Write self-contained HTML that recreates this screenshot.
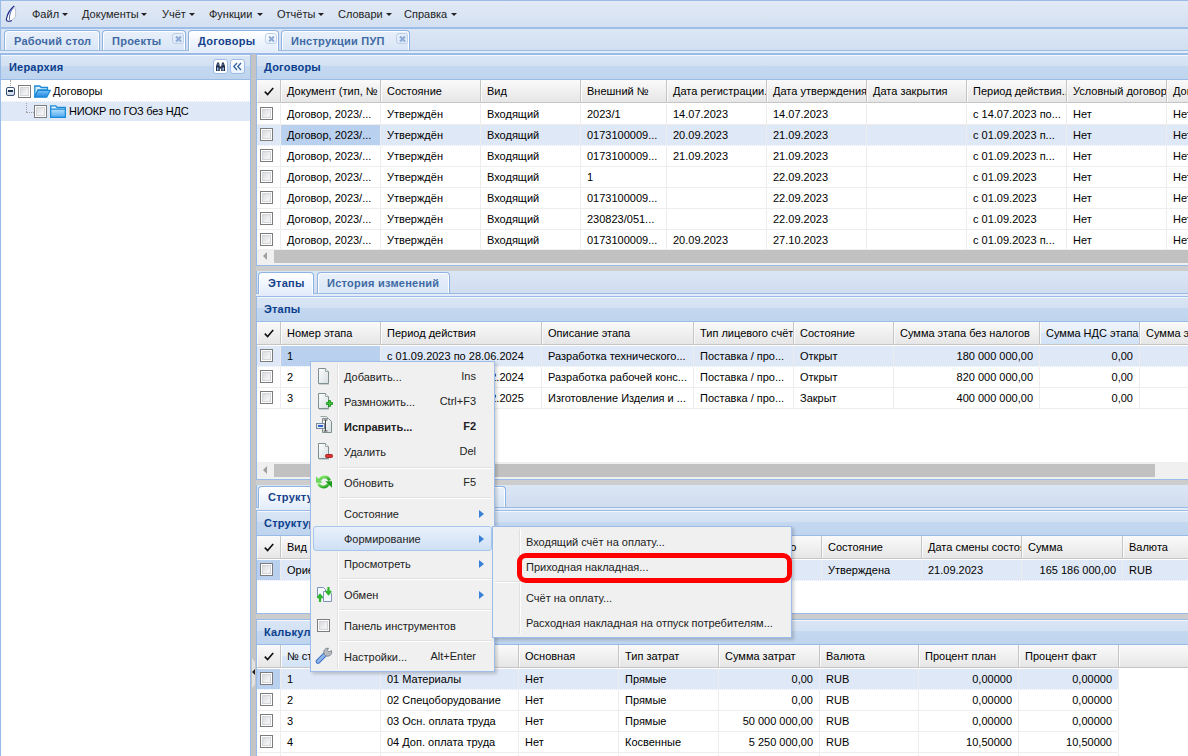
<!DOCTYPE html><html><head><meta charset="utf-8"><title>UI</title><style>
*{box-sizing:border-box;margin:0;padding:0}
html,body{width:1188px;height:756px;overflow:hidden}
body{position:relative;background:#fff;font-family:"Liberation Sans",sans-serif;font-size:11px;color:#000}
.a{position:absolute}
.t{position:absolute;white-space:nowrap;line-height:13px}
.b{font-weight:bold}
.tri{position:absolute;width:0;height:0;border-left:3px solid transparent;border-right:3px solid transparent;border-top:3px solid #222}
.tab{position:absolute;border:1px solid #8eb3e3;border-bottom:none;border-radius:4px 4px 0 0;background:linear-gradient(#e9f0fa,#d9e6f6);box-shadow:inset 1px 1px 0 #fff,inset -1px 0 0 #fff}
.tab.act{background:linear-gradient(#ffffff,#e3edfb)}
.tabt{position:absolute;font-weight:bold;color:#3e69a4;white-space:nowrap;line-height:13px;letter-spacing:.25px}
.act .tabt{color:#15428b}
.cls{position:absolute;width:12px;height:11px;border:1px solid #bcd0ec;border-radius:3px}
.cls:before,.cls:after{content:"";position:absolute;left:1.5px;top:3.5px;width:7px;height:2px;background:#8eaad6;transform:rotate(45deg)}
.cls:after{transform:rotate(-45deg)}
.ph{position:absolute;height:25px;background:linear-gradient(#dae6f5 0,#d3e1f3 45%,#c4d8f0 46%,#bfd4ee 100%);border-bottom:1px solid #99bbe8;box-shadow:inset 0 1px 0 #f4f8fd}
.pht{position:absolute;left:7px;top:6px;font-weight:bold;color:#0b3f8c;white-space:nowrap;line-height:13px;letter-spacing:.2px}
.gh{position:absolute;height:23px;background:linear-gradient(#fafafa,#e6e6e6);border-bottom:1px solid #c5c5c5}
.hc{position:absolute;top:0;height:22px;border-right:1px solid #c5c5c5;overflow:hidden;white-space:nowrap;padding:5px 0 0 6px;line-height:13px;box-shadow:inset 1px 0 0 #fbfbfb}
.row{position:absolute;height:21px;border-bottom:1px solid #ededed;background:#fff}
.row.sel{background:#dfe8f6;border-bottom:1px dotted #fff}
.c{position:absolute;top:0;height:20px;border-right:1px solid #ededed;overflow:hidden;white-space:nowrap;padding:4px 0 0 6px;line-height:13px}
.c.r{text-align:right;padding:4px 6px 0 0}
.c.fc{background:#b9d0ee}
.chk{position:absolute;width:13px;height:13px;border:1px solid #7c7c7c;background:linear-gradient(135deg,#cdd1d8,#f3f3f3 65%,#ececec);box-shadow:inset 0 0 0 1px #fff,inset 0 0 0 2px #d4d6da}
.ck{position:absolute;left:7px;top:7px;width:10px;height:9px}
.sb{position:absolute;height:16px;background:#f0f0f0}
.thumb{position:absolute;height:13px;background:#c1c1c1}
.gray{position:absolute;background:#cdcdcd}
.menu{position:absolute;background:#f0f0f0;border:1px solid #9cbde8;box-shadow:2px 2px 3px rgba(0,0,0,.18)}
.mi{position:absolute;white-space:nowrap;line-height:13px;color:#222}
.msep{position:absolute;height:2px;border-top:1px solid #e0e0e0;border-bottom:1px solid #fff}
.mvl{position:absolute;width:2px;border-left:1px solid #e0e0e0;border-right:1px solid #fff}
.marr{position:absolute;width:0;height:0;border-top:4.5px solid transparent;border-bottom:4.5px solid transparent;border-left:5px solid #3a7fd6}
</style></head><body>
<div class="a" style="left:0;top:0;width:1188px;height:29px;background:linear-gradient(#e2eaf6,#d3e0f1);border-top:1px solid #99bbe8;border-bottom:2px solid #9dbde9;border-left:1px solid #99bbe8"></div>
<svg class="a" style="left:0;top:0" width="24" height="26" viewBox="0 0 24 26"><path d="M14.2 6 C11 8.5 7.2 14 6.3 19.6 C6.2 21.8 9.2 21.6 11.8 20.4 L15.4 16.8 C15.9 13 15.8 9 14.2 6 Z" fill="#fdfdff" stroke="#aeb6c8" stroke-width="0.8"/><path d="M14.2 6 C11 8.5 7.2 14 6.3 19.6 C6.2 21.8 9.2 21.6 11.8 20.4" fill="none" stroke="#1a2a88" stroke-width="1.1"/><path d="M13.2 8 C10.8 10.5 9.2 14.5 9.4 19.8" fill="none" stroke="#3d55a8" stroke-width="0.9"/></svg>
<div class="t" style="left:32px;top:8px;color:#222">Файл</div>
<div class="tri" style="left:62px;top:13px"></div>
<div class="t" style="left:82px;top:8px;color:#222">Документы</div>
<div class="tri" style="left:141px;top:13px"></div>
<div class="t" style="left:162px;top:8px;color:#222">Учёт</div>
<div class="tri" style="left:189px;top:13px"></div>
<div class="t" style="left:209px;top:8px;color:#222">Функции</div>
<div class="tri" style="left:257px;top:13px"></div>
<div class="t" style="left:277px;top:8px;color:#222">Отчёты</div>
<div class="tri" style="left:318px;top:13px"></div>
<div class="t" style="left:338px;top:8px;color:#222">Словари</div>
<div class="tri" style="left:386px;top:13px"></div>
<div class="t" style="left:404px;top:8px;color:#222">Справка</div>
<div class="tri" style="left:451px;top:13px"></div>
<div class="a" style="left:0;top:29px;width:1188px;height:25px;background:linear-gradient(#dce7f5,#cfddf0);border-left:1px solid #99bbe8"></div>
<div class="a" style="left:0;top:50px;width:1188px;height:1px;background:#99bbe8"></div>
<div class="a" style="left:0;top:51px;width:1188px;height:2px;background:#e3ecf8"></div>
<div class="a" style="left:0;top:53px;width:1188px;height:1px;background:#99bbe8"></div>
<div class="tab" style="left:4px;top:30px;width:96px;height:20px">
<div class="tabt" style="left:9px;top:4px">Рабочий стол</div>
</div>
<div class="tab" style="left:102px;top:30px;width:84px;height:20px">
<div class="tabt" style="left:9px;top:4px">Проекты</div>
<div class="cls" style="left:69px;top:2px"></div>
</div>
<div class="tab act" style="left:188px;top:30px;width:91px;height:21px">
<div class="tabt" style="left:9px;top:4px">Договоры</div>
<div class="cls" style="left:76px;top:2px"></div>
</div>
<div class="tab" style="left:281px;top:30px;width:129px;height:20px">
<div class="tabt" style="left:9px;top:4px">Инструкции ПУП</div>
<div class="cls" style="left:114px;top:2px"></div>
</div>
<div class="a" style="left:0;top:54px;width:251px;height:702px;border-left:1px solid #99bbe8;border-top:1px solid #99bbe8;border-right:1px solid #99bbe8;background:#fff"></div>
<div class="ph" style="left:1px;top:55px;width:249px"><div class="pht" style="left:8px">Иерархия</div></div>
<div class="a" style="left:213px;top:59px;width:15px;height:15px;border:1px solid #9dbde6;border-radius:3px;background:#fff"></div>
<svg class="a" style="left:213px;top:59px" width="15" height="15" viewBox="0 0 15 15"><path d="M3 12 v-4.5 l1.2-4 h1.8 l0.8 4 v4.5 z" fill="#1d2a44"/><path d="M8.2 12 v-4.5 l0.8-4 h1.8 l1.2 4 v4.5 z" fill="#1d2a44"/><rect x="6.5" y="7.5" width="2" height="2" fill="#1d2a44"/><rect x="4" y="8.5" width="1.5" height="3" fill="#9cc0f0"/><rect x="9.4" y="8.5" width="1.5" height="3" fill="#9cc0f0"/><rect x="4.6" y="4.5" width="1" height="2" fill="#6c8fd0"/><rect x="9.4" y="4.5" width="1" height="2" fill="#6c8fd0"/></svg>
<div class="a" style="left:230px;top:59px;width:15px;height:15px;border:1px solid #9dbde6;border-radius:3px;background:linear-gradient(#fff,#eaf2fc)"></div>
<svg class="a" style="left:230px;top:59px" width="15" height="15" viewBox="0 0 15 15"><path d="M7 4 L3.8 7.5 L7 11 M11 4 L7.8 7.5 L11 11" fill="none" stroke="#34659f" stroke-width="1.3"/></svg>
<div class="a" style="left:1px;top:101px;width:249px;height:20px;background:#dfe8f6;border-top:1px dotted #fff"></div>
<div class="a" style="left:10px;top:80px;width:1px;height:6px;border-left:1px dotted #a0a0a0"></div>
<div class="a" style="left:26px;top:103px;width:1px;height:9px;border-left:1px dotted #a0a0a0"></div>
<div class="a" style="left:26px;top:112px;width:8px;height:1px;border-top:1px dotted #a0a0a0"></div>
<div class="a" style="left:6px;top:87px;width:9px;height:9px;border:1px solid #3b5275;border-radius:2px;background:linear-gradient(#ffffff,#c9d6e6)"></div>
<div class="a" style="left:8px;top:90px;width:5px;height:2px;background:#1b2f50"></div>
<div class="chk" style="left:18px;top:85px"></div>
<div class="chk" style="left:34px;top:105px"></div>
<svg class="a" style="left:34px;top:85px" width="17" height="13" viewBox="0 0 17 13"><defs><linearGradient id="fo" x1="0" y1="0" x2="0" y2="1"><stop offset="0" stop-color="#7cc4fa"/><stop offset="1" stop-color="#1f86e0"/></linearGradient></defs><path d="M0.8 1 h5 l1.5 1.5 h6.2 v2.5 h-9.5 l-3.2 7 z" fill="#d8ecfc" stroke="#1a8ad8" stroke-width="1.3"/><path d="M4 5.3 h12.3 l-3.6 6.9 h-12.3 z" fill="url(#fo)" stroke="#1a8ad8" stroke-width="1.2"/></svg>
<div class="t" style="left:53px;top:85px">Договоры</div>
<svg class="a" style="left:50px;top:105px" width="16" height="13" viewBox="0 0 16 13"><defs><linearGradient id="fc" x1="0" y1="0" x2="0" y2="1"><stop offset="0" stop-color="#b8e0fd"/><stop offset="1" stop-color="#4aa8f0"/></linearGradient></defs><path d="M0.7 0.8 h5 l1.5 1.7 h8.1 v9.8 h-14.6 z" fill="#dff0fd" stroke="#1a8ad8" stroke-width="1.3"/><path d="M0.7 4.2 h14.6 v8.1 h-14.6 z" fill="url(#fc)" stroke="#1a8ad8" stroke-width="1.2"/></svg>
<div class="t" style="left:69px;top:105px;letter-spacing:-0.2px">НИОКР по ГОЗ без НДС</div>
<div class="gray" style="left:251px;top:54px;width:5px;height:702px;background:#c4c4c4"></div>
<div class="a" style="left:252px;top:658px;width:3px;height:30px;background:#e2e2e2;clip-path:polygon(0 0,100% 12%,100% 88%,0 100%)"></div>
<div class="a" style="left:252px;top:669px;width:0;height:0;border-top:3.5px solid transparent;border-bottom:3.5px solid transparent;border-right:3px solid #222"></div>
<div class="a" style="left:256px;top:54px;width:932px;height:212px;border-left:1px solid #99bbe8;border-top:1px solid #99bbe8;border-bottom:1px solid #99bbe8;background:#fff"></div>
<div class="ph" style="left:257px;top:55px;width:931px"><div class="pht">Договоры</div></div>
<div class="gh" style="left:257px;top:80px;width:931px"><div class="hc" style="left:0px;width:24px;padding:4px 0 0 0;"><svg class="ck" viewBox="0 0 10 9"><path d="M0.8 4.6 L3.6 7.6 L9.2 1" fill="none" stroke="#111" stroke-width="1.6"/></svg></div><div class="hc" style="left:24px;width:100px;">Документ (тип, №</div><div class="hc" style="left:124px;width:100px;">Состояние</div><div class="hc" style="left:224px;width:100px;">Вид</div><div class="hc" style="left:324px;width:86px;">Внешний №</div><div class="hc" style="left:410px;width:100px;">Дата регистрации..</div><div class="hc" style="left:510px;width:100px;">Дата утверждения</div><div class="hc" style="left:610px;width:100px;">Дата закрытия</div><div class="hc" style="left:710px;width:100px;">Период действия..</div><div class="hc" style="left:810px;width:100px;">Условный договор</div><div class="hc" style="left:910px;width:100px;">Дог</div></div><div class="row" style="left:257px;top:104px;width:931px"><div class="c" style="left:0px;width:24px"><div class="chk" style="left:3px;top:3px"></div></div><div class="c" style="left:24px;width:100px">Договор, 2023/...</div><div class="c" style="left:124px;width:100px">Утверждён</div><div class="c" style="left:224px;width:100px">Входящий</div><div class="c" style="left:324px;width:86px">2023/1</div><div class="c" style="left:410px;width:100px">14.07.2023</div><div class="c" style="left:510px;width:100px">14.07.2023</div><div class="c" style="left:610px;width:100px"></div><div class="c" style="left:710px;width:100px">с 14.07.2023 по...</div><div class="c" style="left:810px;width:100px">Нет</div><div class="c" style="left:910px;width:100px">Нет</div></div><div class="row sel" style="left:257px;top:125px;width:931px"><div class="c" style="left:0px;width:24px"><div class="chk" style="left:3px;top:3px"></div></div><div class="c fc" style="left:24px;width:100px">Договор, 2023/...</div><div class="c" style="left:124px;width:100px">Утверждён</div><div class="c" style="left:224px;width:100px">Входящий</div><div class="c" style="left:324px;width:86px">0173100009...</div><div class="c" style="left:410px;width:100px">20.09.2023</div><div class="c" style="left:510px;width:100px">21.09.2023</div><div class="c" style="left:610px;width:100px"></div><div class="c" style="left:710px;width:100px">с 01.09.2023 п...</div><div class="c" style="left:810px;width:100px">Нет</div><div class="c" style="left:910px;width:100px">Нет</div></div><div class="row" style="left:257px;top:146px;width:931px"><div class="c" style="left:0px;width:24px"><div class="chk" style="left:3px;top:3px"></div></div><div class="c" style="left:24px;width:100px">Договор, 2023/...</div><div class="c" style="left:124px;width:100px">Утверждён</div><div class="c" style="left:224px;width:100px">Входящий</div><div class="c" style="left:324px;width:86px">0173100009...</div><div class="c" style="left:410px;width:100px">21.09.2023</div><div class="c" style="left:510px;width:100px">21.09.2023</div><div class="c" style="left:610px;width:100px"></div><div class="c" style="left:710px;width:100px">с 01.09.2023 п...</div><div class="c" style="left:810px;width:100px">Нет</div><div class="c" style="left:910px;width:100px">Нет</div></div><div class="row" style="left:257px;top:167px;width:931px"><div class="c" style="left:0px;width:24px"><div class="chk" style="left:3px;top:3px"></div></div><div class="c" style="left:24px;width:100px">Договор, 2023/...</div><div class="c" style="left:124px;width:100px">Утверждён</div><div class="c" style="left:224px;width:100px">Входящий</div><div class="c" style="left:324px;width:86px">1</div><div class="c" style="left:410px;width:100px"></div><div class="c" style="left:510px;width:100px">22.09.2023</div><div class="c" style="left:610px;width:100px"></div><div class="c" style="left:710px;width:100px">с 01.09.2023</div><div class="c" style="left:810px;width:100px">Нет</div><div class="c" style="left:910px;width:100px">Нет</div></div><div class="row" style="left:257px;top:188px;width:931px"><div class="c" style="left:0px;width:24px"><div class="chk" style="left:3px;top:3px"></div></div><div class="c" style="left:24px;width:100px">Договор, 2023/...</div><div class="c" style="left:124px;width:100px">Утверждён</div><div class="c" style="left:224px;width:100px">Входящий</div><div class="c" style="left:324px;width:86px">0173100009...</div><div class="c" style="left:410px;width:100px"></div><div class="c" style="left:510px;width:100px">22.09.2023</div><div class="c" style="left:610px;width:100px"></div><div class="c" style="left:710px;width:100px">с 01.09.2023</div><div class="c" style="left:810px;width:100px">Нет</div><div class="c" style="left:910px;width:100px">Нет</div></div><div class="row" style="left:257px;top:209px;width:931px"><div class="c" style="left:0px;width:24px"><div class="chk" style="left:3px;top:3px"></div></div><div class="c" style="left:24px;width:100px">Договор, 2023/...</div><div class="c" style="left:124px;width:100px">Утверждён</div><div class="c" style="left:224px;width:100px">Входящий</div><div class="c" style="left:324px;width:86px">230823/051...</div><div class="c" style="left:410px;width:100px"></div><div class="c" style="left:510px;width:100px">22.09.2023</div><div class="c" style="left:610px;width:100px"></div><div class="c" style="left:710px;width:100px">с 01.09.2023</div><div class="c" style="left:810px;width:100px">Нет</div><div class="c" style="left:910px;width:100px">Нет</div></div><div class="row" style="left:257px;top:230px;width:931px"><div class="c" style="left:0px;width:24px"><div class="chk" style="left:3px;top:3px"></div></div><div class="c" style="left:24px;width:100px">Договор, 2023/...</div><div class="c" style="left:124px;width:100px">Утверждён</div><div class="c" style="left:224px;width:100px">Входящий</div><div class="c" style="left:324px;width:86px">0173100009...</div><div class="c" style="left:410px;width:100px">20.09.2023</div><div class="c" style="left:510px;width:100px">27.10.2023</div><div class="c" style="left:610px;width:100px"></div><div class="c" style="left:710px;width:100px">с 01.09.2023 п...</div><div class="c" style="left:810px;width:100px">Нет</div><div class="c" style="left:910px;width:100px">Нет</div></div>
<div class="sb" style="left:257px;top:249px;width:931px"></div>
<div class="a" style="left:263px;top:252px;width:0;height:0;border-top:4px solid transparent;border-bottom:4px solid transparent;border-right:4px solid #a0a0a0"></div>
<div class="thumb" style="left:274px;top:250px;width:914px"></div>
<div class="gray" style="left:256px;top:266px;width:932px;height:5px"></div>
<div class="a" style="left:256px;top:271px;width:932px;height:25px;background:linear-gradient(#dbe6f4,#cfdcef);border-left:1px solid #99bbe8"></div><div class="a" style="left:256px;top:293px;width:932px;height:1px;background:#99bbe8"></div><div class="a" style="left:256px;top:294px;width:932px;height:2px;background:#e3ecf8"></div><div class="tab act" style="left:258px;top:272px;width:56px;height:22px"><div class="tabt" style="left:9px;top:4px">Этапы</div></div><div class="tab" style="left:317px;top:272px;width:133px;height:21px"><div class="tabt" style="left:9px;top:4px">История изменений</div></div>
<div class="a" style="left:256px;top:296px;width:932px;height:184px;border-left:1px solid #99bbe8;border-top:1px solid #99bbe8;border-bottom:1px solid #99bbe8;background:#fff"></div>
<div class="ph" style="left:257px;top:297px;width:931px"><div class="pht">Этапы</div></div>
<div class="gh" style="left:257px;top:322px;width:931px"><div class="hc" style="left:0px;width:24px;padding:4px 0 0 0;"><svg class="ck" viewBox="0 0 10 9"><path d="M0.8 4.6 L3.6 7.6 L9.2 1" fill="none" stroke="#111" stroke-width="1.6"/></svg></div><div class="hc" style="left:24px;width:100px;">Номер этапа</div><div class="hc" style="left:124px;width:161px;">Период действия</div><div class="hc" style="left:285px;width:152px;">Описание этапа</div><div class="hc" style="left:437px;width:100px;">Тип лицевого счёт</div><div class="hc" style="left:537px;width:100px;">Состояние</div><div class="hc" style="left:637px;width:146px;">Сумма этапа без налогов</div><div class="hc" style="left:783px;width:100px;background:linear-gradient(#eef4fc 0,#e7eff9 50%,#d9e7f8 50%,#d3e3f6 100%);">Сумма НДС этапа</div><div class="hc" style="left:883px;width:101px;">Сумма этапа</div></div><div class="row sel" style="left:257px;top:346px;width:931px"><div class="c" style="left:0px;width:24px"><div class="chk" style="left:3px;top:3px"></div></div><div class="c fc" style="left:24px;width:100px">1</div><div class="c" style="left:124px;width:161px">с 01.09.2023 по 28.06.2024</div><div class="c" style="left:285px;width:152px">Разработка технического...</div><div class="c" style="left:437px;width:100px">Поставка / про...</div><div class="c" style="left:537px;width:100px">Открыт</div><div class="c r" style="left:637px;width:146px">180 000 000,00</div><div class="c r" style="left:783px;width:100px">0,00</div><div class="c" style="left:883px;width:101px"></div></div><div class="row" style="left:257px;top:367px;width:931px"><div class="c" style="left:0px;width:24px"><div class="chk" style="left:3px;top:3px"></div></div><div class="c" style="left:24px;width:100px">2</div><div class="c" style="left:124px;width:161px">с 01.09.2023 по 31.12.2024</div><div class="c" style="left:285px;width:152px">Разработка рабочей конс...</div><div class="c" style="left:437px;width:100px">Поставка / про...</div><div class="c" style="left:537px;width:100px">Открыт</div><div class="c r" style="left:637px;width:146px">820 000 000,00</div><div class="c r" style="left:783px;width:100px">0,00</div><div class="c" style="left:883px;width:101px"></div></div><div class="row" style="left:257px;top:388px;width:931px"><div class="c" style="left:0px;width:24px"><div class="chk" style="left:3px;top:3px"></div></div><div class="c" style="left:24px;width:100px">3</div><div class="c" style="left:124px;width:161px">с 01.09.2023 по 31.12.2025</div><div class="c" style="left:285px;width:152px">Изготовление Изделия и ...</div><div class="c" style="left:437px;width:100px">Поставка / про...</div><div class="c" style="left:537px;width:100px">Закрыт</div><div class="c r" style="left:637px;width:146px">400 000 000,00</div><div class="c r" style="left:783px;width:100px">0,00</div><div class="c" style="left:883px;width:101px"></div></div>
<div class="sb" style="left:257px;top:462px;width:931px;height:17px"></div>
<div class="a" style="left:263px;top:466px;width:0;height:0;border-top:4px solid transparent;border-bottom:4px solid transparent;border-right:4px solid #a0a0a0"></div>
<div class="thumb" style="left:274px;top:464px;width:881px"></div>
<div class="gray" style="left:256px;top:480px;width:932px;height:5px"></div>
<div class="a" style="left:256px;top:485px;width:932px;height:25px;background:linear-gradient(#dbe6f4,#cfdcef);border-left:1px solid #99bbe8"></div><div class="a" style="left:256px;top:507px;width:932px;height:1px;background:#99bbe8"></div><div class="a" style="left:256px;top:508px;width:932px;height:2px;background:#e3ecf8"></div><div class="tab act" style="left:258px;top:486px;width:80px;height:22px"><div class="tabt" style="left:9px;top:4px">Структура договора</div></div><div class="tab" style="left:342px;top:486px;width:164px;height:21px"><div class="tabt" style="left:9px;top:4px">Второй</div></div>
<div class="a" style="left:256px;top:510px;width:932px;height:104px;border-left:1px solid #99bbe8;border-top:1px solid #99bbe8;border-bottom:1px solid #99bbe8;background:#fff"></div>
<div class="ph" style="left:257px;top:511px;width:931px"><div class="pht">Структура договора</div></div>
<div class="gh" style="left:257px;top:536px;width:931px"><div class="hc" style="left:0px;width:24px;padding:4px 0 0 0;"><svg class="ck" viewBox="0 0 10 9"><path d="M0.8 4.6 L3.6 7.6 L9.2 1" fill="none" stroke="#111" stroke-width="1.6"/></svg></div><div class="hc" style="left:24px;width:100px;">Вид</div><div class="hc" style="left:124px;width:141px;"></div><div class="hc" style="left:265px;width:100px;"></div><div class="hc" style="left:365px;width:100px;"></div><div class="hc" style="left:465px;width:100px;">&nbsp;&nbsp;&nbsp;&nbsp;Исполнено</div><div class="hc" style="left:565px;width:100px;">Состояние</div><div class="hc" style="left:665px;width:100px;">Дата смены состояния</div><div class="hc" style="left:765px;width:101px;">Сумма</div><div class="hc" style="left:866px;width:100px;">Валюта</div></div><div class="row sel" style="left:257px;top:560px;width:931px"><div class="c fc" style="left:0px;width:24px"><div class="chk" style="left:3px;top:3px"></div></div><div class="c" style="left:24px;width:100px">Ориентировочная</div><div class="c" style="left:124px;width:141px"></div><div class="c" style="left:265px;width:100px"></div><div class="c" style="left:365px;width:100px"></div><div class="c" style="left:465px;width:100px"></div><div class="c" style="left:565px;width:100px">Утверждена</div><div class="c" style="left:665px;width:100px">21.09.2023</div><div class="c r" style="left:765px;width:101px">165 186 000,00</div><div class="c" style="left:866px;width:100px">RUB</div></div>
<div class="gray" style="left:256px;top:614px;width:932px;height:5px"></div>
<div class="a" style="left:256px;top:619px;width:932px;height:137px;border-left:1px solid #99bbe8;border-top:1px solid #99bbe8;background:#fff"></div>
<div class="ph" style="left:257px;top:620px;width:931px"><div class="pht">Калькуляция</div></div>
<div class="gh" style="left:257px;top:645px;width:931px"><div class="hc" style="left:0px;width:24px;padding:4px 0 0 0;"><svg class="ck" viewBox="0 0 10 9"><path d="M0.8 4.6 L3.6 7.6 L9.2 1" fill="none" stroke="#111" stroke-width="1.6"/></svg></div><div class="hc" style="left:24px;width:100px;background:linear-gradient(#eef4fc 0,#e7eff9 50%,#d9e7f8 50%,#d3e3f6 100%);">№ статьи</div><div class="hc" style="left:124px;width:138px;">Статья затрат</div><div class="hc" style="left:262px;width:100px;">Основная</div><div class="hc" style="left:362px;width:100px;">Тип затрат</div><div class="hc" style="left:462px;width:101px;">Сумма затрат</div><div class="hc" style="left:563px;width:99px;">Валюта</div><div class="hc" style="left:662px;width:100px;">Процент план</div><div class="hc" style="left:762px;width:100px;">Процент факт</div><div class="hc" style="left:862px;width:70px;"></div></div><div class="row sel" style="left:257px;top:669px;width:861px"><div class="c fc" style="left:0px;width:24px"><div class="chk" style="left:3px;top:3px"></div></div><div class="c" style="left:24px;width:100px">1</div><div class="c" style="left:124px;width:138px">01 Материалы</div><div class="c" style="left:262px;width:100px">Нет</div><div class="c" style="left:362px;width:100px">Прямые</div><div class="c r" style="left:462px;width:101px">0,00</div><div class="c" style="left:563px;width:99px">RUB</div><div class="c r" style="left:662px;width:100px">0,00000</div><div class="c r" style="left:762px;width:100px">0,00000</div></div><div class="row" style="left:257px;top:690px;width:861px"><div class="c" style="left:0px;width:24px"><div class="chk" style="left:3px;top:3px"></div></div><div class="c" style="left:24px;width:100px">2</div><div class="c" style="left:124px;width:138px">02 Спецоборудование</div><div class="c" style="left:262px;width:100px">Нет</div><div class="c" style="left:362px;width:100px">Прямые</div><div class="c r" style="left:462px;width:101px">0,00</div><div class="c" style="left:563px;width:99px">RUB</div><div class="c r" style="left:662px;width:100px">0,00000</div><div class="c r" style="left:762px;width:100px">0,00000</div></div><div class="row" style="left:257px;top:711px;width:861px"><div class="c" style="left:0px;width:24px"><div class="chk" style="left:3px;top:3px"></div></div><div class="c" style="left:24px;width:100px">3</div><div class="c" style="left:124px;width:138px">03 Осн. оплата труда</div><div class="c" style="left:262px;width:100px">Нет</div><div class="c" style="left:362px;width:100px">Прямые</div><div class="c r" style="left:462px;width:101px">50 000 000,00</div><div class="c" style="left:563px;width:99px">RUB</div><div class="c r" style="left:662px;width:100px">0,00000</div><div class="c r" style="left:762px;width:100px">0,00000</div></div><div class="row" style="left:257px;top:732px;width:861px"><div class="c" style="left:0px;width:24px"><div class="chk" style="left:3px;top:3px"></div></div><div class="c" style="left:24px;width:100px">4</div><div class="c" style="left:124px;width:138px">04 Доп. оплата труда</div><div class="c" style="left:262px;width:100px">Нет</div><div class="c" style="left:362px;width:100px">Косвенные</div><div class="c r" style="left:462px;width:101px">5 250 000,00</div><div class="c" style="left:563px;width:99px">RUB</div><div class="c r" style="left:662px;width:100px">10,50000</div><div class="c r" style="left:762px;width:100px">10,50000</div></div><div class="row" style="left:257px;top:753px;width:861px"><div class="c" style="left:0px;width:24px"><div class="chk" style="left:3px;top:3px"></div></div><div class="c" style="left:24px;width:100px">5</div><div class="c" style="left:124px;width:138px"></div><div class="c" style="left:262px;width:100px"></div><div class="c" style="left:362px;width:100px"></div><div class="c r" style="left:462px;width:101px"></div><div class="c" style="left:563px;width:99px"></div><div class="c r" style="left:662px;width:100px"></div><div class="c r" style="left:762px;width:100px"></div></div>
<div class="menu" style="left:310px;top:361px;width:185px;height:311px">
<div class="mvl" style="left:26px;top:2px;height:304px"></div>
<div class="a" style="left:2px;top:164px;width:179px;height:25px;border:1px solid #a8c6ec;border-radius:3px;background:linear-gradient(#e9f1fb,#cfe0f5)"></div>
<div class="mi" style="left:33px;top:9px">Добавить...</div>
<div class="mi" style="right:18px;top:8px">Ins</div>
<div class="mi" style="left:33px;top:34px">Размножить...</div>
<div class="mi" style="right:18px;top:33px">Ctrl+F3</div>
<div class="mi b" style="left:33px;top:59px">Исправить...</div>
<div class="mi b" style="right:18px;top:58px">F2</div>
<div class="mi" style="left:33px;top:84px">Удалить</div>
<div class="mi" style="right:18px;top:83px">Del</div>
<div class="mi" style="left:33px;top:115px">Обновить</div>
<div class="mi" style="right:18px;top:114px">F5</div>
<div class="mi" style="left:33px;top:146px">Состояние</div>
<div class="marr" style="left:168px;top:148px"></div>
<div class="mi" style="left:33px;top:171px">Формирование</div>
<div class="marr" style="left:168px;top:173px"></div>
<div class="mi" style="left:33px;top:196px">Просмотреть</div>
<div class="marr" style="left:168px;top:198px"></div>
<div class="mi" style="left:33px;top:227px">Обмен</div>
<div class="marr" style="left:168px;top:229px"></div>
<div class="mi" style="left:33px;top:258px">Панель инструментов</div>
<div class="mi" style="left:33px;top:289px">Настройки...</div>
<div class="mi" style="right:18px;top:288px">Alt+Enter</div>
<div class="msep" style="left:28px;top:105px;width:153px"></div>
<div class="msep" style="left:28px;top:135px;width:153px"></div>
<div class="msep" style="left:28px;top:216px;width:153px"></div>
<div class="msep" style="left:28px;top:247px;width:153px"></div>
<div class="msep" style="left:28px;top:278px;width:153px"></div>
</div>
<svg class="a" style="left:317px;top:368px" width="14" height="18" viewBox="0 0 14 18"><defs><linearGradient id="pg" x1="0" y1="0" x2="1" y2="1"><stop offset="0" stop-color="#ffffff"/><stop offset="1" stop-color="#d5dedf"/></linearGradient></defs><path d="M1.5 0.5 h7 l3 3 v12 h-10 z" fill="url(#pg)" stroke="#7f8e8e"/><path d="M8.5 0.5 v3 h3" fill="#fff" stroke="#9aa5a5"/><path d="M2 16.5 h10" stroke="#c9cfcf"/></svg>
<svg class="a" style="left:317px;top:393px" width="16" height="18" viewBox="0 0 16 18"><path d="M1.5 0.5 h7 l3 3 v12 h-10 z" fill="url(#pg)" stroke="#7f8e8e"/><path d="M8.5 0.5 v3 h3" fill="#fff" stroke="#9aa5a5"/><path d="M2 16.5 h10" stroke="#c9cfcf"/><path d="M9.5 9.5 h2 v-2 h2 v2 h2 v2 h-2 v2 h-2 v-2 h-2 z" fill="#3cc43c" stroke="#138a13" stroke-width="0.8"/></svg>
<svg class="a" style="left:315px;top:416px" width="18" height="19" viewBox="0 0 18 19"><path d="M7.5 2.5 h6 l3 3 v11 h-9 z" fill="url(#pg)" stroke="#7f8e8e"/><path d="M5.5 0.5 h6 l2 2" fill="none" stroke="#9aa5a5"/><rect x="1.5" y="7.5" width="8" height="5" fill="#e8ecf2" stroke="#7a8aa0"/><rect x="3" y="9" width="5" height="2" fill="#2c62d0"/><path d="M10.5 4 v11 M8.5 4 h4 M8.5 15 h4" stroke="#333" stroke-width="0.9" fill="none"/></svg>
<svg class="a" style="left:317px;top:443px" width="16" height="18" viewBox="0 0 16 18"><path d="M1.5 0.5 h7 l3 3 v12 h-10 z" fill="url(#pg)" stroke="#7f8e8e"/><path d="M8.5 0.5 v3 h3" fill="#fff" stroke="#9aa5a5"/><path d="M2 16.5 h10" stroke="#c9cfcf"/><rect x="8.5" y="11.5" width="7" height="3" rx="1" fill="#e03030" stroke="#9a1515" stroke-width="0.8"/></svg>
<svg class="a" style="left:315px;top:474px" width="18" height="16" viewBox="0 0 18 16"><defs><linearGradient id="gg" x1="0" y1="0" x2="1" y2="1"><stop offset="0" stop-color="#8fee70"/><stop offset="1" stop-color="#1a9e1a"/></linearGradient></defs><path d="M4.6 6.2 C6.5 2.2 12.5 1.5 14.6 6.5" fill="none" stroke="url(#gg)" stroke-width="2.8"/><path d="M1 2.2 L1 8.8 L7.6 8.8 Z" fill="#6ad85a"/><path d="M13.4 9.8 C11.5 13.8 5.5 14.5 3.4 9.5" fill="none" stroke="url(#gg)" stroke-width="2.8"/><path d="M17 13.8 L17 7.2 L10.4 7.2 Z" fill="#1c9c1c"/></svg>
<svg class="a" style="left:316px;top:586px" width="17" height="17" viewBox="0 0 17 17"><path d="M1.5 1.5 h6 l2 2 v8 h-8 z" fill="#f4f7fb" stroke="#7f94b8"/><path d="M7.5 5.5 h6 l2 2 v8 h-8 z" fill="#f4f7fb" stroke="#7f94b8"/><path d="M4 16 v-6 M1.5 12 l2.5 -3 l2.5 3" stroke="#2fb52f" stroke-width="2.2" fill="none"/><path d="M12.5 1 v6 M10 5 l2.5 3 l2.5 -3" stroke="#2fb52f" stroke-width="2.2" fill="none"/></svg>
<div class="chk" style="left:317px;top:619px"></div>
<svg class="a" style="left:315px;top:647px" width="18" height="17" viewBox="0 0 18 17"><path d="M3 14.5 L10.5 7" stroke="#3f74c4" stroke-width="4.6" stroke-linecap="round"/><path d="M3 14.5 L10.5 7" stroke="#8fb4e8" stroke-width="2.6" stroke-linecap="round"/><path d="M9.5 7.5 A4 4 0 0 1 13.5 1.2 L12.3 3.5 L14 5 L16.4 3.6 A4 4 0 0 1 10.5 8.5 Z" fill="#b8bcc2" stroke="#7d838b" stroke-width="0.9"/></svg>
<div class="menu" style="left:492px;top:526px;width:300px;height:112px">
<div class="mvl" style="left:26px;top:2px;height:104px"></div>
<div class="msep" style="left:2px;top:54px;width:294px"></div>
<div class="mi" style="left:33px;top:9px">Входящий счёт на оплату...</div>
<div class="mi" style="left:33px;top:34px">Приходная накладная...</div>
<div class="mi" style="left:33px;top:65px">Счёт на оплату...</div>
<div class="mi" style="left:33px;top:90px">Расходная накладная на отпуск потребителям...</div>
</div>
<div class="a" style="left:517px;top:553px;width:275px;height:30px;border:5px solid #ff0000;border-radius:9px"></div>
</body></html>
